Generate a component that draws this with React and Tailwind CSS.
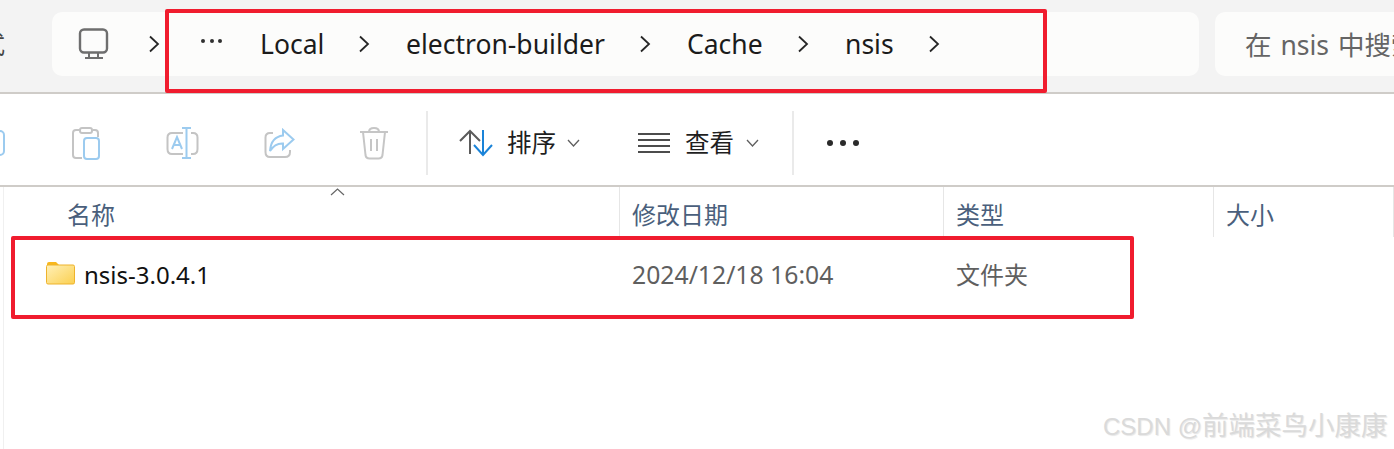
const F = { fontFamily: '"Noto Sans", "Noto Sans CJK SC", sans-serif' };

function Chevron() {
  return (
    <svg width="14" height="20" viewBox="0 0 14 20" fill="none" stroke="#262626" strokeWidth="1.8">
      <path d="M3 2.5 L11 10 L3 17.5" />
    </svg>
  );
}

function Crumb({ text, w }) {
  return (
    <div className="flex items-center h-full pt-[2px]" style={{ width: w }}>
      <span className="text-[26.500px] text-[#1b1b1b] leading-none whitespace-nowrap">{text}</span>
    </div>
  );
}

function Monitor() {
  return (
    <svg width="32" height="32" viewBox="0 0 32 32" fill="none" stroke="#6e6e6e" strokeWidth="2.4">
      <rect x="2" y="1.5" width="27" height="23" rx="4" />
      <path d="M11 25 V30 M20 25 V30" strokeWidth="2" />
      <path d="M7 30 H25" strokeWidth="2" />
    </svg>
  );
}

function PasteIcon() {
  return (
    <svg width="30" height="33" viewBox="0 0 30 33" fill="none" strokeWidth="2">
      <path d="M10 3 H5 Q2 3 2 6 V28 Q2 31 5 31 H11" stroke="#c4c4c4" />
      <path d="M22 3 H24 Q27 3 27 6 V10" stroke="#c4c4c4" />
      <rect x="9" y="1" width="12" height="5" rx="2" stroke="#c4c4c4" />
      <rect x="13" y="11" width="15" height="21" rx="3" stroke="#9ccbef" />
    </svg>
  );
}

function RenameIcon() {
  return (
    <svg width="33" height="33" viewBox="0 0 33 33" fill="none" strokeWidth="2">
      <path d="M17 6 H6 Q1.500 6 1.500 10.500 V22 Q1.500 27 6 27 H17" stroke="#c4c4c4" />
      <path d="M25 6 H27 Q31.500 6 31.500 10.500 V22 Q31.500 27 27 27 H25" stroke="#c4c4c4" />
      <path d="M16 1 H25 M20.500 1 V31 M16 31 H25" stroke="#9ccbef" />
      <path d="M6 22 L11 10 L16 22 M8 18 H14" stroke="#9ccbef" />
    </svg>
  );
}

function ShareIcon() {
  return (
    <svg width="31" height="31" viewBox="0 0 31 31" fill="none" strokeWidth="2">
      <path d="M9 5 H6 Q1.500 5 1.500 9.500 V24 Q1.500 29 6 29 H21 Q26 29 26 24 V22" stroke="#c4c4c4" />
      <path d="M19 2 L29.500 11.500 L19 21 V15.500 Q11 15 6 23 Q7 9 19 7.500 Z" stroke="#9ccbef" />
    </svg>
  );
}

function TrashIcon() {
  return (
    <svg width="30" height="33" viewBox="0 0 30 33" fill="none" stroke="#c6c6c6" strokeWidth="2">
      <path d="M1 5 H29" />
      <path d="M10 5 Q10 1 15 1 Q20 1 20 5" />
      <path d="M4 5 L6.500 28 Q7 31.500 10.500 31.500 H19.500 Q23 31.500 23.500 28 L26 5" />
      <path d="M12 12 V24 M18 12 V24" />
    </svg>
  );
}

function SortIcon() {
  return (
    <svg width="34" height="28" viewBox="0 0 34 28" fill="none" strokeWidth="2">
      <path d="M1 12 L11 2 L21 12 M11 2 V25" stroke="#5b5b5b" />
      <path d="M15 16 L24 26 L33 16 M24 1 V26" stroke="#1a83d8" />
    </svg>
  );
}

function ListIcon() {
  return (
    <svg width="34" height="22" viewBox="0 0 34 22" fill="none" stroke="#4c4c4c" strokeWidth="2">
      <path d="M1 2 H33 M1 8 H33 M1 14 H33 M1 20 H33" />
    </svg>
  );
}

function SmallCaret() {
  return (
    <svg width="13" height="8" viewBox="0 0 13 8" fill="none" stroke="#5f5f5f" strokeWidth="1.300">
      <path d="M1 1 L6.500 7 L12 1" />
    </svg>
  );
}

function FolderIcon() {
  return (
    <svg width="29" height="24" viewBox="0 0 29 24">
      <defs>
        <linearGradient id="fold" x1="0" y1="0" x2="1" y2="1">
          <stop offset="0" stopColor="#fff0b8" />
          <stop offset="1" stopColor="#fbd050" />
        </linearGradient>
      </defs>
      <path d="M1 3 Q1 1 3 1 H10 L13 4 H1 Z" fill="#f8b71c" />
      <rect x="0.500" y="4" width="28" height="19" rx="1.500" fill="url(#fold)" stroke="#eeb32c" />
    </svg>
  );
}

function HeaderCell({ w, text, pl }) {
  return (
    <div
      className="h-full shrink-0 flex items-center pt-[6px] text-[24px] text-[#4a5f7c] leading-none border-r border-[#e6e6e6]"
      style={{ width: w, paddingLeft: pl }}
    >
      {text}
    </div>
  );
}

export default function App() {
  return (
    <div className="relative w-[1394px] h-[449px] overflow-hidden bg-white" style={F}>
      {/* address row */}
      <div className="h-[94px] bg-[#f3f3f3] border-b-2 border-[#cfccc8] flex pt-[12px]">
        <div className="w-[52px] shrink-0 h-[64px] flex items-center">
          <div className="w-[5px] overflow-hidden flex justify-end text-[24px] text-[#444] leading-none">
            <span className="shrink-0">式</span>
          </div>
        </div>
        <div className="w-[1147px] h-[64px] rounded-[10px] bg-[#fcfcfb] flex items-center pb-[1px] shrink-0">
          <div className="ml-[26px] w-[69px] flex items-center"><Monitor /></div>
          <Chevron />
          <div className="w-[40px]" />
          <div className="w-[21px] flex justify-between items-center mb-[5px]">
            <span className="w-[4px] h-[4px] rounded-full bg-[#303030]" />
            <span className="w-[4px] h-[4px] rounded-full bg-[#303030]" />
            <span className="w-[4px] h-[4px] rounded-full bg-[#303030]" />
          </div>
          <div className="w-[38px]" />
          <Crumb text="Local" w={97} />
          <Chevron />
          <div className="w-[35px]" />
          <Crumb text="electron-builder" w={232} />
          <Chevron />
          <div className="w-[35px]" />
          <Crumb text="Cache" w={109} />
          <Chevron />
          <div className="w-[35px]" />
          <Crumb text="nsis" w={82} />
          <Chevron />
        </div>
        <div className="ml-[16px] flex-1 h-[64px] rounded-l-[10px] bg-[#fcfcfb] flex items-center pl-[30px] pt-[2px] overflow-hidden">
          <span className="text-[26.500px] text-[#656565] whitespace-nowrap leading-none [word-spacing:2px]">在 nsis 中搜索</span>
        </div>
      </div>

      {/* toolbar */}
      <div className="h-[93px] border-b-2 border-[#cfccc8] flex items-center bg-white pt-[7px]">
        <div className="w-[5px] h-[33px] overflow-hidden relative shrink-0">
          <div className="absolute right-0 top-[3px] w-[16px] h-[26px] rounded-[5px] border-2 border-[#9ccbef]" />
        </div>
        <div className="ml-[66px] w-[95px] shrink-0"><PasteIcon /></div>
        <div className="w-[98px] shrink-0"><RenameIcon /></div>
        <div className="w-[95px] shrink-0"><ShareIcon /></div>
        <div className="w-[67px] shrink-0"><TrashIcon /></div>
        <div className="w-[2px] h-[64px] bg-[#eaeaea] shrink-0" />
        <div className="ml-[31px] w-[48px] shrink-0"><SortIcon /></div>
        <span className="w-[60px] shrink-0 text-[24.500px] text-[#1f1f1f] leading-none">排序</span>
        <SmallCaret />
        <div className="ml-[57px] w-[48px] shrink-0"><ListIcon /></div>
        <span className="w-[61px] shrink-0 text-[24.500px] text-[#1f1f1f] leading-none">查看</span>
        <SmallCaret />
        <div className="ml-[33px] w-[2px] h-[64px] bg-[#eaeaea] shrink-0" />
        <div className="ml-[33px] w-[32px] flex justify-between">
          <span className="w-[6px] h-[6px] rounded-full bg-[#2a2a2a]" />
          <span className="w-[6px] h-[6px] rounded-full bg-[#2a2a2a]" />
          <span className="w-[6px] h-[6px] rounded-full bg-[#2a2a2a]" />
        </div>
      </div>

      {/* list */}
      <div className="ml-[3px] h-[262px] border-l border-[#f0f0f0]">
        <div className="relative h-[50px] flex">
          <HeaderCell w={616} text="名称" pl={63} />
          <HeaderCell w={324} text="修改日期" pl={12} />
          <HeaderCell w={270} text="类型" pl={12} />
          <HeaderCell w={180} text="大小" pl={12} />
          <svg className="absolute left-[326px] top-[1px]" width="15" height="8" viewBox="0 0 15 8" fill="none" stroke="#666" strokeWidth="1.200">
            <path d="M1 7 L7.500 1 L14 7" />
          </svg>
        </div>
        <div className="h-[76px] flex items-center">
          <div className="w-[616px] shrink-0 flex items-center pl-[42px] pb-[1px]">
            <div className="mb-[4px] mr-[9px]"><FolderIcon /></div>
            <span className="text-[24px] text-[#111] leading-none">nsis-3.0.4.1</span>
          </div>
          <div className="w-[324px] shrink-0 pl-[12px] text-[24.750px] text-[#5f5f5f] leading-none">2024/12/18 16:04</div>
          <div className="pl-[12px] text-[24px] text-[#5f5f5f] leading-none">文件夹</div>
        </div>
      </div>

      {/* red annotation boxes */}
      <div className="absolute left-[165px] top-[9px] w-[882px] h-[84px] border-[4px] border-[#f01c2e] rounded-[2px]" />
      <div className="absolute left-[11px] top-[236px] w-[1123px] h-[83px] border-[4px] border-[#f01c2e] rounded-[2px]" />

      {/* watermark */}
      <div
        className="absolute left-[1103px] top-[410px] text-[24px] leading-[32px] text-[#dadada] whitespace-nowrap"
        style={{ fontFamily: '"Liberation Sans", "Noto Sans CJK SC", sans-serif', textShadow: "1px 1px 1px #e8e8e8" }}
      >
        CSDN @<span className="text-[26.500px]">前端菜鸟小康康</span>
      </div>
    </div>
  );
}
